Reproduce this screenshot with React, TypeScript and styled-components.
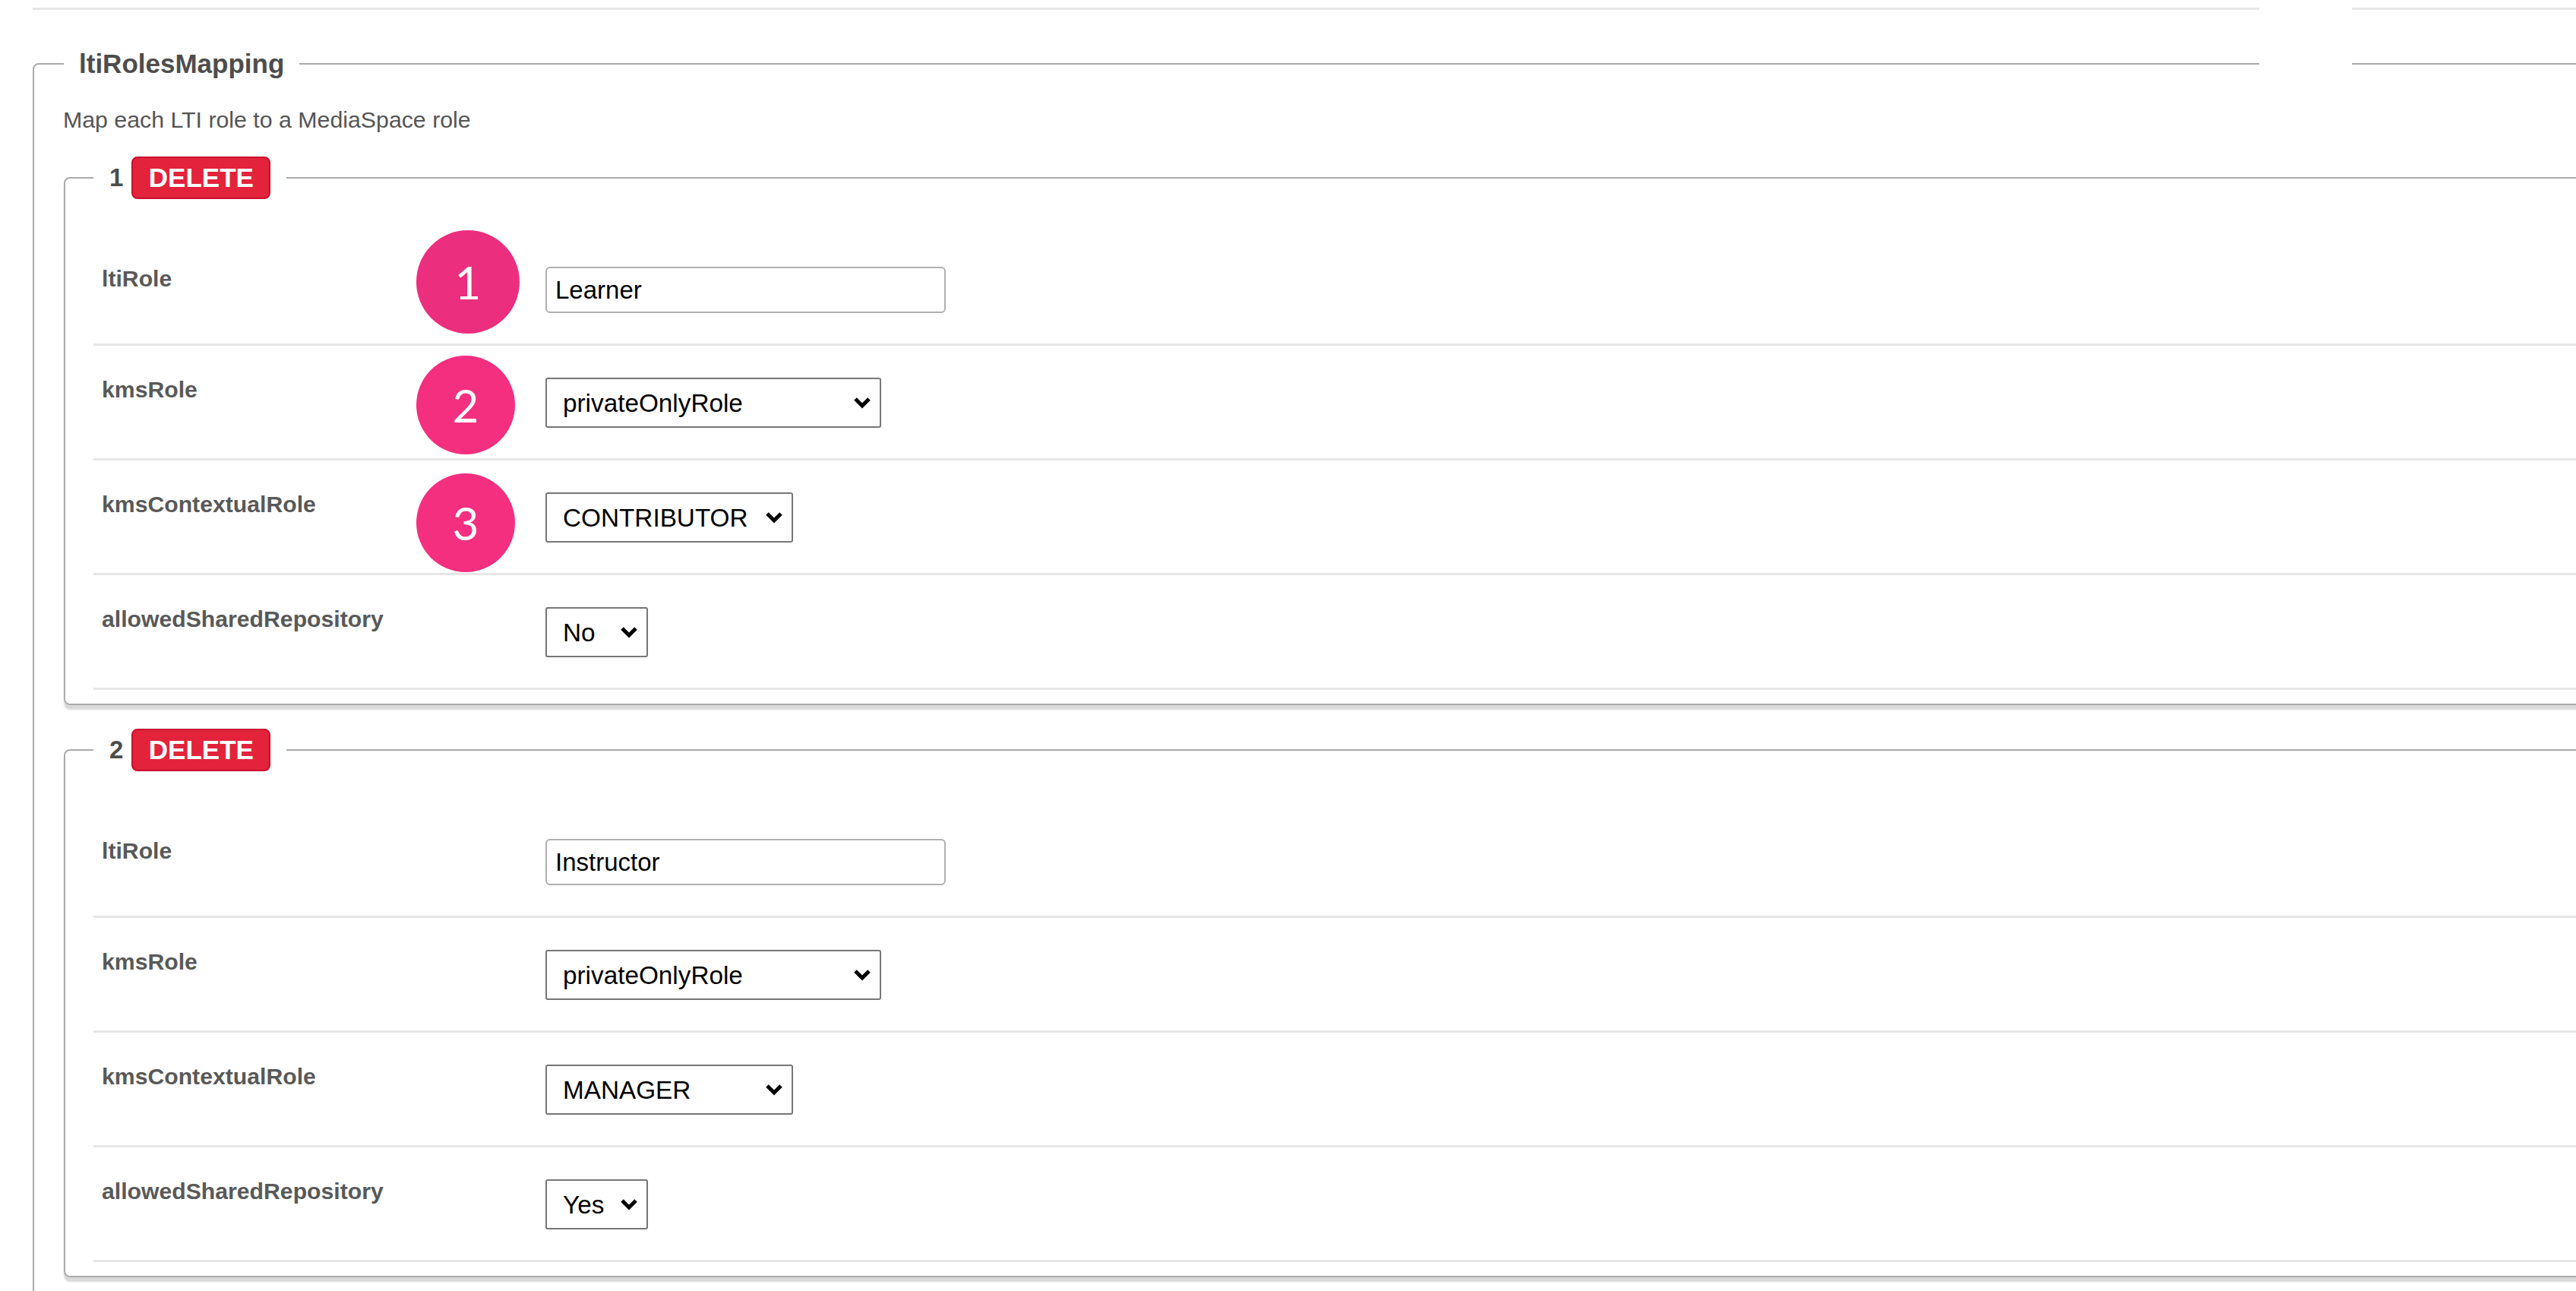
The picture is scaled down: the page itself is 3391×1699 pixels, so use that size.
import React from 'react';
import styled, { createGlobalStyle } from 'styled-components';

interface SelectProps {
  $width: number;
}

interface MarkerProps {
  $top: number;
  $size: number;
  $color: string;
}

const chevron =
  "data:image/svg+xml,%3Csvg xmlns='http://www.w3.org/2000/svg' width='24' height='16' viewBox='0 0 24 16'%3E%3Cpath d='M3 3l9 9 9-9' fill='none' stroke='%23000' stroke-width='5'/%3E%3C/svg%3E";

const GlobalStyle = createGlobalStyle`
  html, body {
    margin: 0;
    padding: 0;
    height: 1699px;
    overflow: hidden;
    background: #fff;
    font-family: "Liberation Sans", Arial, sans-serif;
  }
`;

const Page = styled.div`
  position: relative;
  width: 3700px;
  height: 1699px;
  padding: 10px 0 0 43px;
  box-sizing: border-box;
  overflow: hidden;
`;

const TopRule = styled.div`
  height: 3px;
  background: #e6e6e6;
  margin-bottom: 51px;
`;

const WhitePatch = styled.div`
  position: absolute;
  top: 0;
  left: 2974px;
  width: 122px;
  height: 100px;
  background: #fff;
`;

const OuterSet = styled.fieldset`
  margin: 0;
  padding: 0 0 40px 39px;
  border: 2px solid #ababab;
  border-radius: 8px;
  min-width: 0;
`;

const OuterLegend = styled.legend`
  padding: 0 20px;
  font-size: 35px;
  line-height: 40px;
  font-weight: bold;
  color: #4d4d4d;
`;

const Description = styled.p`
  margin: 37px 0 31px -1px;
  font-size: 30.3px;
  line-height: 34px;
  color: #555;
`;

const RoleSet = styled.fieldset`
  margin: 0 0 31px;
  padding: 47px 0 18px 37px;
  border: 2px solid #ababab;
  border-radius: 8px;
  min-width: 0;
  box-shadow: 0 6px 2px rgba(0, 0, 0, 0.15);
`;

const RoleLegend = styled.legend`
  display: flex;
  align-items: center;
  gap: 11px;
  padding: 0 21px;
  font-size: 33px;
  font-weight: bold;
  color: #4d4d4d;
`;

const DeleteButton = styled.button`
  height: 56px;
  width: 183px;
  padding: 0;
  box-sizing: border-box;
  border: 2px solid #c8102e;
  border-radius: 8px;
  background: #e2233b;
  color: #fff;
  font-family: inherit;
  font-size: 35px;
  font-weight: bold;
`;

const Row = styled.div`
  position: relative;
  display: flex;
  align-items: flex-start;
  padding: 42px 0 40px 11px;
  border-bottom: 3px solid #e6e6e6;
`;

const Label = styled.label`
  width: 584px;
  flex: none;
  margin-top: -1px;
  font-size: 30.2px;
  line-height: 34px;
  font-weight: bold;
  color: #595959;
`;

const TextInput = styled.input`
  width: 527px;
  height: 61px;
  box-sizing: border-box;
  padding: 0 0 0 11px;
  border: 2px solid #b0b0b0;
  border-radius: 6px;
  background: #fff;
  color: #000;
  font-family: inherit;
  font-size: 33px;
`;

const Select = styled.select<SelectProps>`
  appearance: none;
  width: ${({ $width }) => $width}px;
  height: 66px;
  box-sizing: border-box;
  padding: 0 0 0 21px;
  border: 2px solid #767676;
  border-radius: 3px;
  background: #fff url("${chevron}") no-repeat right 11px center;
  color: #000;
  font-family: inherit;
  font-size: 33.3px;
`;

const Marker = styled.div<MarkerProps>`
  position: absolute;
  left: 425px;
  top: ${({ $top }) => $top}px;
  width: ${({ $size }) => $size}px;
  height: ${({ $size }) => $size}px;
  display: flex;
  align-items: center;
  justify-content: center;
  border-radius: 50%;
  background: ${({ $color }) => $color};
  color: #fff;
  font-family: Lato, sans-serif;
  font-size: 60px;
`;

const marks = [
  { top: -6, size: 136, color: '#ec2e7e' },
  { top: 13, size: 130, color: '#f52f80' },
  { top: 17, size: 130, color: '#f52f80' },
];

const roles = [
  { id: 1, lti: 'Learner', kms: 'privateOnlyRole', contextual: 'CONTRIBUTOR', shared: 'No', marked: true },
  { id: 2, lti: 'Instructor', kms: 'privateOnlyRole', contextual: 'MANAGER', shared: 'Yes', marked: false },
];

const App: React.FC = () => {
  return (
    <Page>
      <GlobalStyle />
      <TopRule />
      <OuterSet>
        <OuterLegend>ltiRolesMapping</OuterLegend>
        <Description>Map each LTI role to a MediaSpace role</Description>
        {roles.map((role) => (
          <RoleSet key={role.id}>
            <RoleLegend>
              {role.id}
              <DeleteButton type="button">DELETE</DeleteButton>
            </RoleLegend>
            <Row>
              {role.marked && <Marker $top={marks[0].top} $size={marks[0].size} $color={marks[0].color}>1</Marker>}
              <Label>ltiRole</Label>
              <TextInput defaultValue={role.lti} />
            </Row>
            <Row>
              {role.marked && <Marker $top={marks[1].top} $size={marks[1].size} $color={marks[1].color}>2</Marker>}
              <Label>kmsRole</Label>
              <Select $width={442} defaultValue={role.kms}>
                <option>privateOnlyRole</option>
                <option>viewerRole</option>
              </Select>
            </Row>
            <Row>
              {role.marked && <Marker $top={marks[2].top} $size={marks[2].size} $color={marks[2].color}>3</Marker>}
              <Label>kmsContextualRole</Label>
              <Select $width={326} defaultValue={role.contextual}>
                <option>CONTRIBUTOR</option>
                <option>MANAGER</option>
              </Select>
            </Row>
            <Row>
              <Label>allowedSharedRepository</Label>
              <Select $width={135} defaultValue={role.shared}>
                <option>No</option>
                <option>Yes</option>
              </Select>
            </Row>
          </RoleSet>
        ))}
      </OuterSet>
      <WhitePatch />
    </Page>
  );
};

export default App;
